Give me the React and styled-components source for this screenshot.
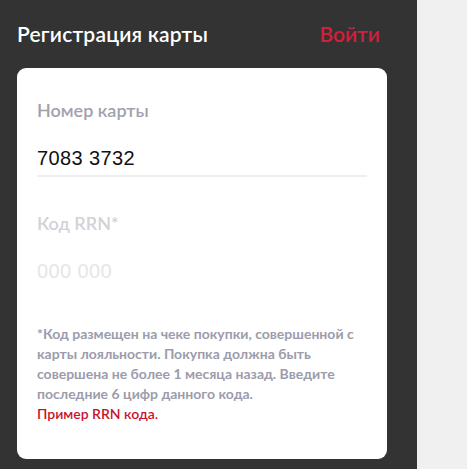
import styled, { createGlobalStyle } from "styled-components";

const GlobalStyle = createGlobalStyle`
    body {
        margin: 0;
        font-family: "Lato", "Noto Sans", sans-serif;
        background-color: #f0f0f0;
    }
`;

export default function App(){

    return (
        <>
        <GlobalStyle />
        <Page>
            <Panel>
                <Header>
                    <Title>Регистрация карты</Title>
                    <Login href="#">Войти</Login>
                </Header>
                <Card>
                    <Field label="Номер карты" value="7083 3732" filled />
                    <Field label="Код RRN*" value="000 000" />
                    <Note>
                        *Код размещен на чеке покупки, совершенной с карты лояльности.
                        Покупка должна быть совершена не более 1 месяца назад. Введите
                        последние 6 цифр данного кода.
                        <br />
                        <Example href="#">Пример RRN кода.</Example>
                    </Note>
                </Card>
            </Panel>
            <Side />
        </Page>
        </>
    );

}

function Field(props){

    const { label, value, filled } = props;

    return (
        <FieldBox filled={filled ? 1 : 0}>
            <Label filled={filled ? 1 : 0}>{label}</Label>
            <Value filled={filled ? 1 : 0}>{value}</Value>
        </FieldBox>
    );

}

const Page = styled.div `
    display: flex;
    min-height: 100vh;
`

const Panel = styled.div `
    width: 417px;
    box-sizing: border-box;
    background-color: #333333;
    padding: 17px 30px 12px 17px;
`

const Side = styled.div `
    flex: 1;
    background-color: #f0f0f0;
`

const Header = styled.div `
    display: flex;
    justify-content: space-between;
    align-items: baseline;
    padding: 0 7px 0 0;
    height: 51px;
`

const Title = styled.div `
    font-size: 21px;
    font-weight: 600;
    color: #ffffff;
    line-height: 34px;
    letter-spacing: 0.2px;
`

const Login = styled.a `
    font-size: 21px;
    font-weight: 600;
    color: #d0213b;
    text-decoration: none;
    line-height: 34px;
`

const Card = styled.div `
    background-color: #ffffff;
    border-radius: 9px;
    padding: 30px 20px 35px 20px;
`

const FieldBox = styled.div `
    border-bottom: 2px solid ${props => props.filled ? '#efefef' : 'transparent'};
    margin-bottom: ${props => props.filled ? '34px' : '34px'};
`

const Label = styled.div `
    font-size: 18px;
    font-weight: 600;
    color: ${props => props.filled ? '#a1a1ae' : '#d2d2d8'};
    line-height: 24px;
    margin-bottom: 24px;
`

const Value = styled.div `
    font-family: "Liberation Sans", Arial, sans-serif;
    font-size: 20px;
    color: ${props => props.filled ? '#111111' : '#e6e6e6'};
    line-height: 24px;
    padding-bottom: 5px;
    letter-spacing: 0.4px;
`

const Note = styled.div `
    font-size: 14px;
    font-weight: 700;
    line-height: 20px;
    color: #9c9cab;
    padding-right: 8px;
`

const Example = styled.a `
    color: #c8132f;
    font-weight: 600;
    text-decoration: none;
`
